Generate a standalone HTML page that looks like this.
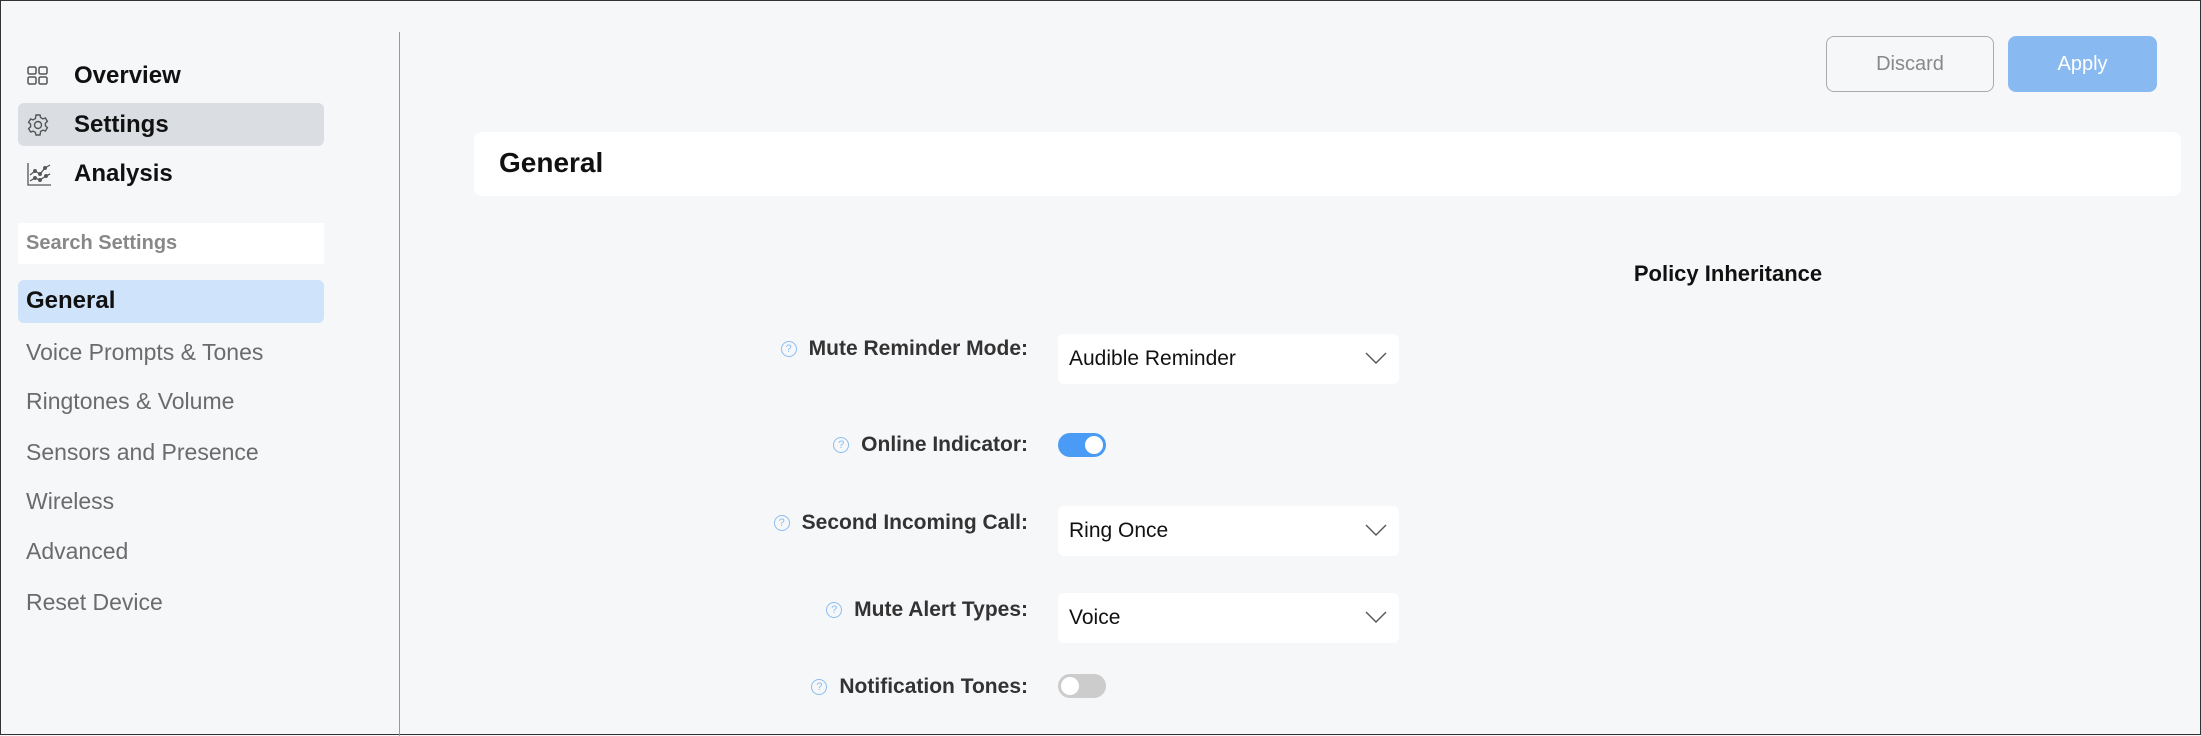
<!DOCTYPE html>
<html><head><meta charset="utf-8"><style>
*{box-sizing:border-box;margin:0;padding:0}
body{width:2201px;height:735px;background:#f6f7f9;font-family:"Liberation Sans",sans-serif;position:relative;overflow:hidden;border:1px solid #333}
.a{position:absolute}
.nav{left:17px;width:306px;height:43px;display:flex;align-items:center;font-size:24px;font-weight:bold;color:#111;border-radius:6px}
.nav svg{position:absolute;left:8px}
.nav span{position:absolute;left:56px}
.item{left:25px;font-size:23px;color:#6b6b6b;line-height:30px}
.lbl{right:1172px;font-size:21px;font-weight:bold;color:#333;display:flex;align-items:center;gap:12px;height:30px}
.q{width:16px;height:16px;border:1.3px solid #8cbcf2;border-radius:50%;color:#8cbcf2;font-size:11px;display:flex;align-items:center;justify-content:center;font-weight:normal}
.sel{left:1057px;width:341px;height:50px;background:#fff;border-radius:6px;font-size:21px;color:#111;padding-left:11px;display:flex;align-items:center}
.sel svg{position:absolute;right:12px;top:18px}
.tg{left:1057px;width:48px;height:24px;border-radius:12px}
.tg i{position:absolute;top:3px;width:18px;height:18px;border-radius:50%;background:#fff}
</style></head><body>
<div class="a" style="left:398px;top:31px;width:1px;height:704px;background:#999"></div>

<div class="a nav" style="top:53px"><svg width="24" height="24" viewBox="0 0 24 24" fill="none" stroke="#555" stroke-width="1.5"><rect x="2" y="3" width="8" height="7" rx="1.5"/><rect x="13" y="3" width="8" height="7" rx="1.5"/><rect x="2" y="13" width="8" height="7" rx="1.5"/><rect x="13" y="13" width="8" height="7" rx="1.5"/></svg><span>Overview</span></div>
<div class="a nav" style="top:102px;background:#dadee3"><svg width="24" height="24" viewBox="0 0 24 24" fill="none" stroke="#555" stroke-width="1.4"><circle cx="12" cy="12" r="3.5"/><path d="M10 2h4l.6 2.6 2.3 1.3 2.5-.9 2 3.4-2 1.8v2.6l2 1.8-2 3.4-2.5-.9-2.3 1.3L14 22h-4l-.6-2.6-2.3-1.3-2.5.9-2-3.4 2-1.8v-2.6l-2-1.8 2-3.4 2.5.9 2.3-1.3z"/></svg><span>Settings</span></div>
<div class="a nav" style="top:151px"><svg width="26" height="26" viewBox="0 0 26 26" fill="none" stroke="#555" stroke-width="1.3"><path d="M2 2v22h23"/><path d="M4 20l5-3 5 2 6-4 4-2"/><path d="M4 14l5-4 5 3 5-6 5-3"/><circle cx="9" cy="10" r="1.3"/><circle cx="14" cy="13" r="1.3"/><circle cx="19" cy="7" r="1.3"/><circle cx="9" cy="17" r="1.3"/><circle cx="14" cy="19" r="1.3"/><circle cx="20" cy="15" r="1.3"/></svg><span>Analysis</span></div>

<div class="a" style="left:17px;top:222px;width:306px;height:41px;background:#fff;font-size:20px;font-weight:bold;color:#888;padding:9px 8px">Search Settings</div>
<div class="a" style="left:17px;top:279px;width:306px;height:43px;background:#cfe3fb;border-radius:6px;font-size:24px;font-weight:bold;color:#111;padding:7px 8px">General</div>
<div class="a item" style="top:336px">Voice Prompts &amp; Tones</div>
<div class="a item" style="top:385px">Ringtones &amp; Volume</div>
<div class="a item" style="top:436px">Sensors and Presence</div>
<div class="a item" style="top:485px">Wireless</div>
<div class="a item" style="top:535px">Advanced</div>
<div class="a item" style="top:586px">Reset Device</div>

<div class="a" style="left:1825px;top:35px;width:168px;height:56px;border:1px solid #aaa;border-radius:8px;font-size:20px;color:#888;display:flex;align-items:center;justify-content:center">Discard</div>
<div class="a" style="left:2007px;top:35px;width:149px;height:56px;background:#89b9f1;border-radius:8px;font-size:20px;color:#fff;display:flex;align-items:center;justify-content:center">Apply</div>

<div class="a" style="left:473px;top:131px;width:1707px;height:64px;background:#fff;border-radius:8px;font-size:28px;font-weight:bold;color:#111;padding:15px 25px">General</div>
<div class="a" style="left:1600px;top:260px;width:254px;text-align:center;font-size:22px;font-weight:bold;color:#111">Policy Inheritance</div>

<div class="a lbl" style="top:333px"><div class="q">?</div>Mute Reminder Mode:</div>
<div class="a sel" style="top:333px">Audible Reminder<svg width="22" height="13" viewBox="0 0 22 13" fill="none" stroke="#555" stroke-width="1.4"><path d="M1 1l10 10 10-10"/></svg></div>
<div class="a lbl" style="top:429px"><div class="q">?</div>Online Indicator:</div>
<div class="a tg" style="top:432px;background:#4a9bf5"><i style="left:27px"></i></div>
<div class="a lbl" style="top:507px"><div class="q">?</div>Second Incoming Call:</div>
<div class="a sel" style="top:505px">Ring Once<svg width="22" height="13" viewBox="0 0 22 13" fill="none" stroke="#555" stroke-width="1.4"><path d="M1 1l10 10 10-10"/></svg></div>
<div class="a lbl" style="top:594px"><div class="q">?</div>Mute Alert Types:</div>
<div class="a sel" style="top:592px">Voice<svg width="22" height="13" viewBox="0 0 22 13" fill="none" stroke="#555" stroke-width="1.4"><path d="M1 1l10 10 10-10"/></svg></div>
<div class="a lbl" style="top:671px"><div class="q">?</div>Notification Tones:</div>
<div class="a tg" style="top:673px;background:#ccc"><i style="left:3px"></i></div>
</body></html>
